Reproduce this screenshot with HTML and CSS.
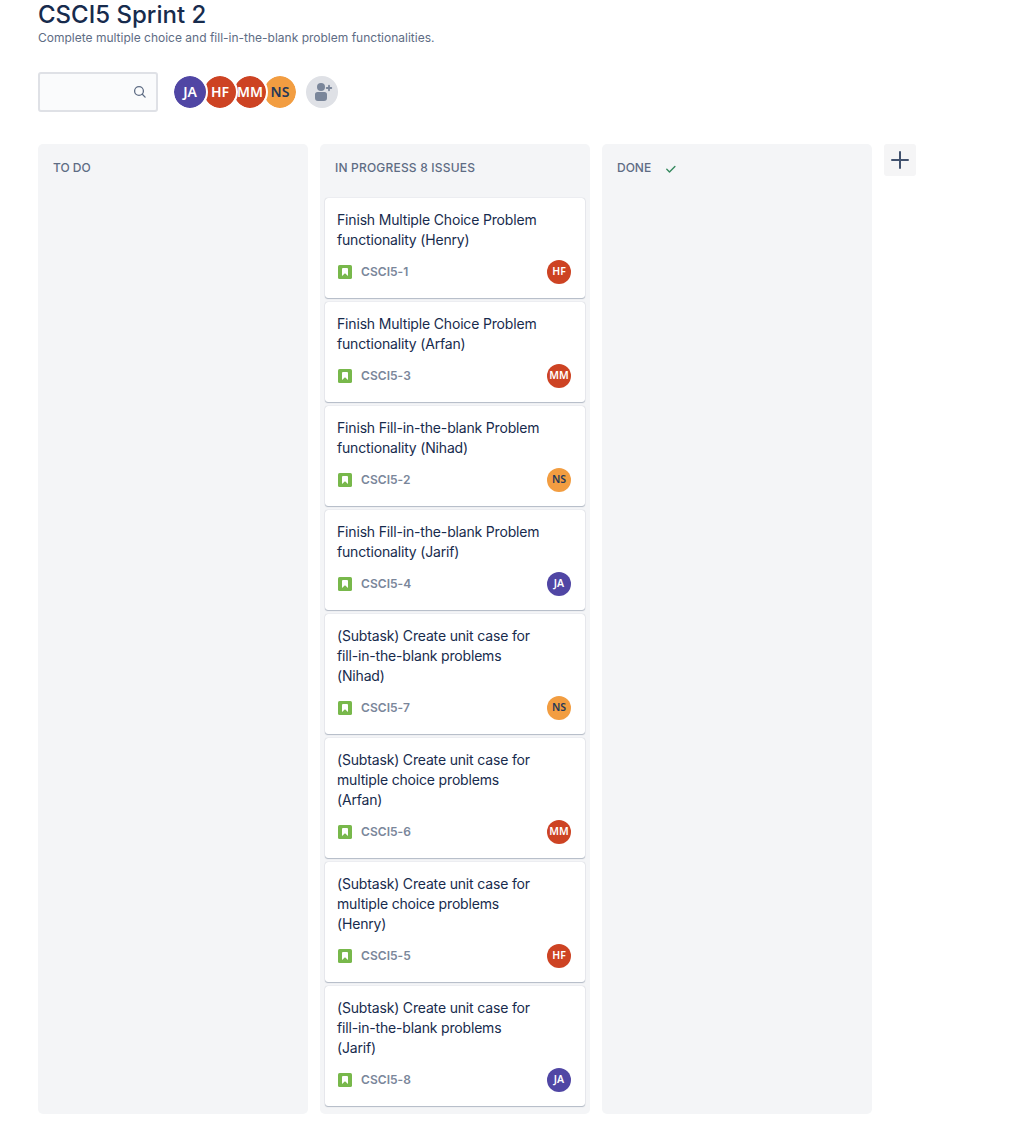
FILE: index.html
```html
<!DOCTYPE html>
<html lang="en">
<head>
<meta charset="utf-8">
<title>CSCI5 Sprint 2</title>
<link rel="stylesheet" href="styles.css">
</head>
<body>
<svg class="sprite" aria-hidden="true">
  <symbol id="story" viewBox="0 0 14 14">
    <rect width="14" height="14" rx="1.6" fill="#78b84b"/>
    <path d="M4 4a1 1 0 0 1 1-1h4a1 1 0 0 1 1 1v7L7 8.3 4 11z" fill="#fff"/>
  </symbol>
</svg>
<main class="page">
  <h1 class="title">CSCI5 Sprint 2</h1>
  <p class="goal">Complete multiple choice and fill-in-the-blank problem functionalities.</p>
  <div class="toolbar">
    <div class="search">
      <svg width="14" height="14" viewBox="0 0 14 14" fill="none" stroke="#5e6c84" stroke-width="1.3" stroke-linecap="round"><circle cx="6" cy="6" r="4.4"/><path d="M9.3 9.3l2.8 2.8"/></svg>
    </div>
    <div class="people">
      <span class="avatar large purple">JA</span>
      <span class="avatar large red">HF</span>
      <span class="avatar large red">MM</span>
      <span class="avatar large orange">NS</span>
    </div>
    <span class="invite">
      <svg width="32" height="32" viewBox="0 0 32 32" fill="#7a869a"><circle cx="15" cy="11" r="4"/><path d="M9 18.5a2.5 2.5 0 0 1 2.5-2.5h7a2.5 2.5 0 0 1 2.5 2.5V22a3 3 0 0 1-3 3h-6a3 3 0 0 1-3-3z"/><path d="M20.7 12h4.6M23 9.7v4.6" stroke="#7a869a" stroke-width="1.8" stroke-linecap="round"/></svg>
    </span>
  </div>
  <div class="board">
    <section class="column"><h2 class="heading">TO DO</h2></section>
    <section class="column">
      <h2 class="heading progress">IN PROGRESS 8 ISSUES</h2>
      <div class="cards">
        <article class="card"><p class="summary">Finish Multiple Choice Problem<br>functionality (Henry)</p><div class="meta"><svg class="story"><use href="#story"/></svg><span class="key">CSCI5-1</span><span class="avatar red">HF</span></div></article>
        <article class="card"><p class="summary">Finish Multiple Choice Problem<br>functionality (Arfan)</p><div class="meta"><svg class="story"><use href="#story"/></svg><span class="key">CSCI5-3</span><span class="avatar red">MM</span></div></article>
        <article class="card"><p class="summary">Finish Fill-in-the-blank Problem<br>functionality (Nihad)</p><div class="meta"><svg class="story"><use href="#story"/></svg><span class="key">CSCI5-2</span><span class="avatar orange">NS</span></div></article>
        <article class="card"><p class="summary">Finish Fill-in-the-blank Problem<br>functionality (Jarif)</p><div class="meta"><svg class="story"><use href="#story"/></svg><span class="key">CSCI5-4</span><span class="avatar purple">JA</span></div></article>
        <article class="card"><p class="summary">(Subtask) Create unit case for<br>fill-in-the-blank problems<br>(Nihad)</p><div class="meta"><svg class="story"><use href="#story"/></svg><span class="key">CSCI5-7</span><span class="avatar orange">NS</span></div></article>
        <article class="card"><p class="summary">(Subtask) Create unit case for<br>multiple choice problems<br>(Arfan)</p><div class="meta"><svg class="story"><use href="#story"/></svg><span class="key">CSCI5-6</span><span class="avatar red">MM</span></div></article>
        <article class="card"><p class="summary">(Subtask) Create unit case for<br>multiple choice problems<br>(Henry)</p><div class="meta"><svg class="story"><use href="#story"/></svg><span class="key">CSCI5-5</span><span class="avatar red">HF</span></div></article>
        <article class="card"><p class="summary">(Subtask) Create unit case for<br>fill-in-the-blank problems<br>(Jarif)</p><div class="meta"><svg class="story"><use href="#story"/></svg><span class="key">CSCI5-8</span><span class="avatar purple">JA</span></div></article>
      </div>
    </section>
    <section class="column"><h2 class="heading">DONE <svg class="check" width="12" height="10" viewBox="0 0 12 10" fill="none" stroke="#36895f" stroke-width="1.4" stroke-linecap="round" stroke-linejoin="round"><path d="M1.8 5.3l2.7 2.6 5.4-5.5"/></svg></h2></section>
    <span class="add"><svg width="32" height="32" viewBox="0 0 32 32" stroke="#42526e" stroke-width="2" stroke-linecap="round"><path d="M8 16h16M16 8v16"/></svg></span>
  </div>
</main>
</body>
</html>
```
FILE: styles.css
```css
* { box-sizing: border-box; }
body { margin: 0; background: #fff; font-family: Inter, "Liberation Sans", sans-serif; }
svg { display: block; }
.sprite { display: none; }
.page { height: 1142px; padding-left: 38px; overflow: hidden; }
.title { margin: 0; height: 28px; font-size: 24px; line-height: 30px; font-weight: 500; letter-spacing: 0; color: #172b4d; }
.goal { margin: 0; padding-top: 2px; height: 44px; font-size: 12px; line-height: 16px; color: #5e6c84; white-space: nowrap; }
.toolbar { display: flex; align-items: center; height: 40px; margin-bottom: 32px; }
.search { display: flex; align-items: center; justify-content: flex-end; width: 120px; height: 40px; padding-right: 9px; background: #fafbfc; border: 2px solid #dfe1e6; border-radius: 3px; }
.people { display: flex; margin-left: 14px; }
.avatar { display: flex; align-items: center; justify-content: center; width: 24px; height: 24px; margin-left: auto; padding-bottom: 1px; border-radius: 50%; font-family: "Noto Sans", "Open Sans", sans-serif; font-size: 10.5px; line-height: 15px; font-weight: 600; color: #fff; }
/* Earlier members sit on top of the later ones */
.avatar.large { width: 36px; height: 36px; margin: 0 -6px 0 0; padding: 0; border: 2px solid #fff; background-clip: padding-box; font-size: 14px; line-height: 20px; box-shadow: inset 0 0 0 0 #fff; }
.avatar.large:nth-child(1) { z-index: 4; }
.avatar.large:nth-child(2) { z-index: 3; }
.avatar.large:nth-child(3) { z-index: 2; }
.avatar.large:nth-child(4) { z-index: 1; }
.purple { background-color: #5046a4; }
.red { background-color: #cd4323; }
.orange { background-color: #f29d41; }
.avatar.orange { color: #253858; }
.invite { margin-left: 14px; border-radius: 50%; background: #dfe1e6; }
.board { display: flex; align-items: flex-start; gap: 12px; }
.column { width: 270px; height: 970px; padding: 0 5px; border-radius: 5px; background: #f4f5f7; }
.heading { display: flex; align-items: center; gap: 14px; height: 54px; margin: 0; padding: 0 10px 6px; font-size: 12px; line-height: 16px; font-weight: 500; color: #5e6c84; }
.progress { letter-spacing: 0.19px; }
.check { margin-top: 1px; }
.cards { display: flex; flex-direction: column; gap: 4px; }
.card { padding: 12px 14px 14px 12px; border-radius: 3px; background: #fff; box-shadow: 0 1px 1px rgba(9, 30, 66, .25), 0 0 1px rgba(9, 30, 66, .31); }
.summary { margin: 0 0 10px; font-size: 14px; line-height: 20px; letter-spacing: -0.17px; color: #172b4d; white-space: nowrap; }
.meta { display: flex; align-items: center; height: 24px; }
.story { width: 14px; height: 14px; margin: 0 9px 0 1px; }
.key { padding-bottom: 1px; font-size: 12px; line-height: 15px; font-weight: 600; letter-spacing: 0.05px; color: #7a869a; }
.add { border-radius: 3px; background: #f5f5f6; }
```
